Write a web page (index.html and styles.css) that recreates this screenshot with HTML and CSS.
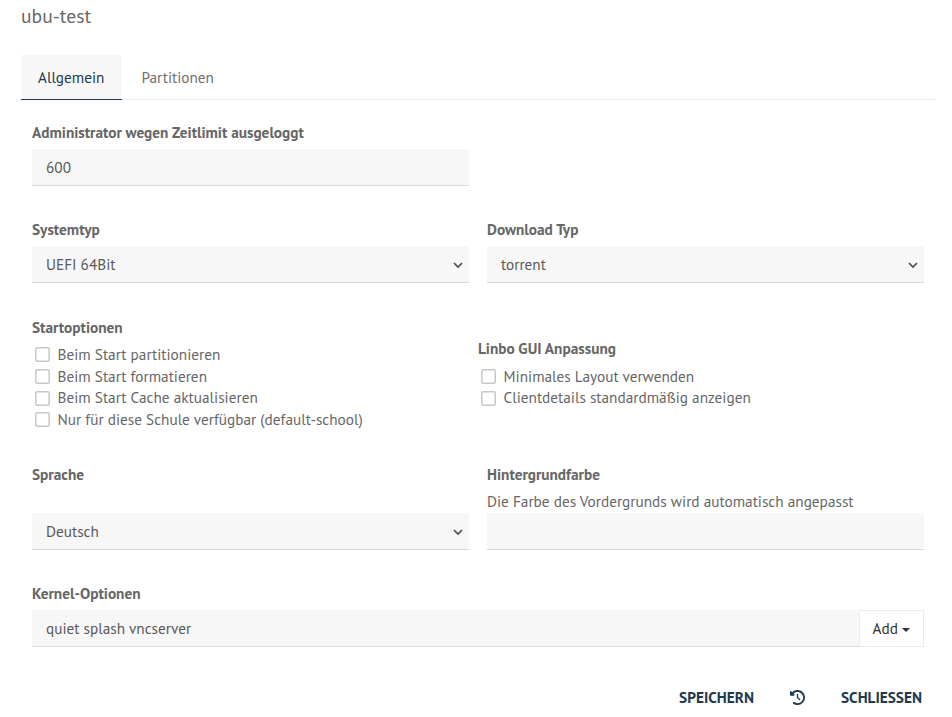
FILE: index.html
```html
<!DOCTYPE html>
<html lang="de">
<head>
<meta charset="utf-8">
<title>ubu-test</title>
<link rel="stylesheet" href="styles.css">
</head>
<body>
<main class="dialog">
  <h1 class="title"><span>ubu-test</span></h1>
  <nav class="tabs">
    <a class="tab active"><span>Allgemein</span></a>
    <a class="tab"><span>Partitionen</span></a>
  </nav>
  <form class="form">
    <div class="row timeout">
      <div class="field"><label class="label"><span>Administrator wegen Zeitlimit ausgeloggt</span></label><div class="control"><span>600</span></div></div>
    </div>
    <div class="row system">
      <div class="field"><label class="label"><span>Systemtyp</span></label><div class="control"><span>UEFI 64Bit</span><svg class="chevron" viewBox="0 0 12 8"><path d="M2 2l4 4 4-4"/></svg></div></div>
      <div class="field"><label class="label"><span>Download Typ</span></label><div class="control"><span>torrent</span><svg class="chevron" viewBox="0 0 12 8"><path d="M2 2l4 4 4-4"/></svg></div></div>
    </div>
    <div class="options">
      <div class="group">
        <div class="label"><span>Startoptionen</span></div>
        <div class="check"><svg class="box" viewBox="0 0 15 15"><rect x=".8" y=".8" width="13.4" height="13.4" rx="1.5"/></svg><span>Beim Start partitionieren</span></div>
        <div class="check"><svg class="box" viewBox="0 0 15 15"><rect x=".8" y=".8" width="13.4" height="13.4" rx="1.5"/></svg><span>Beim Start formatieren</span></div>
        <div class="check"><svg class="box" viewBox="0 0 15 15"><rect x=".8" y=".8" width="13.4" height="13.4" rx="1.5"/></svg><span>Beim Start Cache aktualisieren</span></div>
        <div class="check"><svg class="box" viewBox="0 0 15 15"><rect x=".8" y=".8" width="13.4" height="13.4" rx="1.5"/></svg><span>Nur für diese Schule verfügbar (default-school)</span></div>
      </div>
      <div class="group gui">
        <div class="label"><span>Linbo GUI Anpassung</span></div>
        <div class="check"><svg class="box" viewBox="0 0 15 15"><rect x=".8" y=".8" width="13.4" height="13.4" rx="1.5"/></svg><span>Minimales Layout verwenden</span></div>
        <div class="check"><svg class="box" viewBox="0 0 15 15"><rect x=".8" y=".8" width="13.4" height="13.4" rx="1.5"/></svg><span>Clientdetails standardmäßig anzeigen</span></div>
      </div>
    </div>
    <div class="row language">
      <div class="field"><label class="label"><span>Sprache</span></label><div class="control"><span>Deutsch</span><svg class="chevron" viewBox="0 0 12 8"><path d="M2 2l4 4 4-4"/></svg></div></div>
      <div class="field"><label class="label"><span>Hintergrundfarbe</span></label><div class="hint"><span>Die Farbe des Vordergrunds wird automatisch angepasst</span></div><div class="control"></div></div>
    </div>
    <div class="kernel">
      <label class="label"><span>Kernel-Optionen</span></label>
      <div class="input-group"><div class="control"><span>quiet splash vncserver</span></div><div class="add"><span>Add</span><i class="caret"></i></div></div>
    </div>
  </form>
  <footer class="footer">
    <a class="action"><span>SPEICHERN</span></a>
    <svg class="history" viewBox="0 0 512 512"><path d="M75 75L41 41C26 26 0 37 0 58v110c0 13 11 24 24 24h110c21 0 32-26 17-41l-31-31c35-35 83-56 136-56 106 0 192 86 192 192s-86 192-192 192c-41 0-79-13-110-35-14-10-34-7-45 8s-7 34 8 45c41 29 92 46 147 46 141 0 256-115 256-256S397 0 256 0C185 0 121 29 75 75zm181 53c-13 0-24 11-24 24v104c0 6 3 12 7 17l72 72c9 9 25 9 34 0s9-25 0-34l-65-65v-94c0-13-11-24-24-24z"/></svg>
    <a class="action"><span>SCHLIESSEN</span></a>
  </footer>
</main>
</body>
</html>
```
FILE: styles.css
```css
* { box-sizing: border-box; }
body { margin: 0; background: #fff; color: #666; font-family: "PT Sans", "Noto Sans", sans-serif; font-size: 15.29px; line-height: 21.67px; }
.dialog { padding: 4px 17px 0 21px; height: 717px; overflow: hidden; }
.title { margin: 0 0 28px; font-size: 19.6px; line-height: 23px; font-weight: 400; }
.tabs { display: flex; height: 45px; border-bottom: 1px solid #ebebeb; }
.tab { height: 45px; padding: 12px 17px 0; color: #707070; }
.tab.active { width: 101px; color: #22394d; background: #f7f7f7; border-bottom: 1px solid #22394d; }
.tab + .tab { padding-left: 19.5px; }
.form { padding: 22px 11px 0; }
.row { display: grid; grid-template-columns: 437px 437px; column-gap: 18px; }
.label { display: block; height: 27px; font-weight: 700; white-space: nowrap; }
.control { display: flex; justify-content: space-between; height: 37px; padding: 8px 5px 0 14px; background: #f7f7f7; border-bottom: 1px solid #d9d9d9; color: #595959; }
.chevron { width: 12px; height: 8px; margin-top: 7px; fill: none; stroke: #4d4d4d; stroke-width: 1.7; }
.system { margin-top: 33px; }
.options { display: grid; grid-template-columns: 446px 1fr; margin-top: 34px; }
.gui { padding-top: 21.3px; }
.gui .label { height: 27.37px; }
.check { display: flex; height: 21.67px; padding-left: 3px; white-space: nowrap; }
.box { width: 15px; height: 15px; margin: 3.2px 7.5px 0 0; fill: #fff; stroke: #c8c8c8; stroke-width: 1.5; }
.language { margin-top: 33px; }
.language .field { display: flex; flex-direction: column; height: 86px; }
.language .control { margin-top: auto; }
.hint { margin-bottom: -10px; white-space: nowrap; }
.kernel { margin-top: 33px; }
.input-group { display: grid; grid-template-columns: 827px 65px; }
.add { display: flex; align-items: center; padding: 1px 0 0 12.6px; color: #333; border: 1px solid #ebebeb; }
.caret { margin: 2px 0 0 4px; border: 4px solid transparent; border-top-color: #333; border-bottom: 0; }
.footer { display: flex; align-items: center; justify-content: flex-end; height: 22px; margin-top: 40px; padding-right: 13px; color: #22394d; font-weight: 700; }
.history { width: 15px; height: 15px; margin: 0 36px; fill: #22394d; }
```
